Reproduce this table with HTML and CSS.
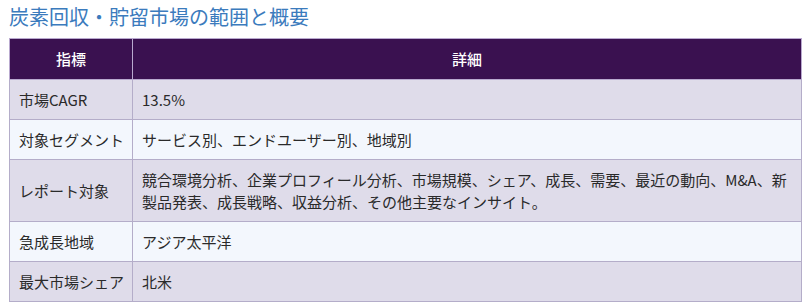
FILE: index.html
```html
<!DOCTYPE html>
<html lang="ja">
<head>
<meta charset="utf-8">
<link rel="stylesheet" href="styles.css">
</head>
<body>
<div class="page">
  <h2 class="title">炭素回収・貯留市場の範囲と概要</h2>
  <table class="scope">
    <thead>
      <tr><th class="c1">指標</th><th>詳細</th></tr>
    </thead>
    <tbody>
      <tr class="odd"><td class="key">市場CAGR</td><td>13.5%</td></tr>
      <tr class="even"><td class="key">対象セグメント</td><td>サービス別、エンドユーザー別、地域別</td></tr>
      <tr class="odd"><td class="key">レポート対象</td><td>競合環境分析、企業プロフィール分析、市場規模、シェア、成長、需要、最近の動向、M&amp;A、新製品発表、成長戦略、収益分析、その他主要なインサイト。</td></tr>
      <tr class="even"><td class="key">急成長地域</td><td>アジア太平洋</td></tr>
      <tr class="odd"><td class="key">最大市場シェア</td><td>北米</td></tr>
    </tbody>
  </table>
</div>
</body>
</html>
```

FILE: styles.css
```css
html, body {
  margin: 0;
  padding: 0;
  background: #ffffff;
}
.page {
  padding: 3px 0 0 9px;
  font-family: "Noto Sans CJK JP", "Noto Sans", sans-serif;
}
.title {
  margin: 0 0 7px 0;
  font-size: 20px;
  line-height: 28px;
  font-weight: 400;
  color: #3b7bbd;
}
.scope {
  width: 793px;
  border-collapse: collapse;
  font-size: 15px;
  color: #2a2a2a;
  table-layout: fixed;
}
.scope th, .scope td {
  border: 1px solid #b4adc9;
  text-align: left;
  vertical-align: middle;
}
.scope th {
  background: #3a1150;
  color: #ffffff;
  font-weight: 500;
  text-align: center;
  line-height: 22px;
  padding: 9px;
  border-color: #b9a9cf;
}
.scope .c1 {
  width: 104px;
}
.scope td {
  line-height: 22px;
  padding: 9px 9px 8px 9px;
}
.scope .key {
  white-space: nowrap;
}
.odd td {
  background: #dfdcea;
}
.even td {
  background: #f3f7fd;
}
```
